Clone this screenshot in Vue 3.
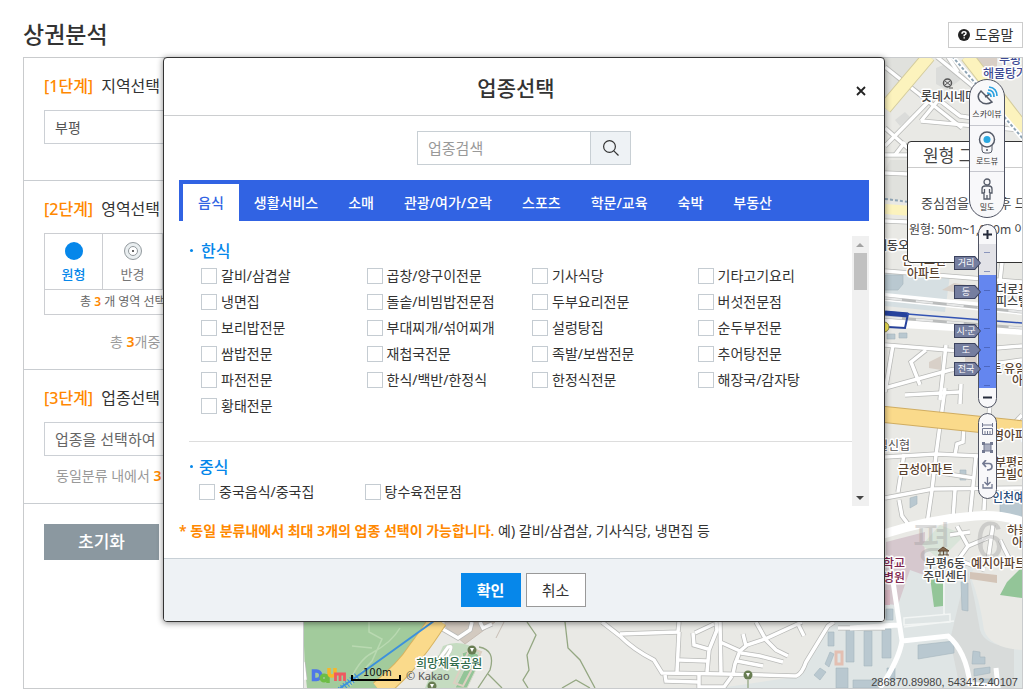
<script setup>
import { ref } from 'vue'

const tabs = ['음식', '생활서비스', '소매', '관광/여가/오락', '스포츠', '학문/교육', '숙박', '부동산']
const activeTab = ref('음식')
const korean = [
  '갈비/삼겹살', '곱창/양구이전문', '기사식당', '기타고기요리',
  '냉면집', '돌솥/비빔밥전문점', '두부요리전문', '버섯전문점',
  '보리밥전문', '부대찌개/섞어찌개', '설렁탕집', '순두부전문',
  '쌈밥전문', '재첩국전문', '족발/보쌈전문', '추어탕전문',
  '파전전문', '한식/백반/한정식', '한정식전문', '해장국/감자탕',
  '황태전문'
]
const chinese = ['중국음식/중국집', '탕수육전문점']
const picked = ref([])
const level = ref(9)
const levels = [
  { name: '거리', top: 31 }, { name: '동', top: 60 }, { name: '시·군', top: 99 },
  { name: '도', top: 118 }, { name: '전국', top: 137 }
]
const streets = [
  'M885 67 L962 128', 'M937 57 L975 88', 'M885 128 L910 150', 'M934 96 L960 116 L1000 122', 'M934 96 L885 146',
  'M921 121 L1022 130', 'M885 155 L910 155', 'M895 155 L905 142', 'M885 173 L908 174', 'M921 121 L940 98', 'M948 57 L958 72',
  'M885 221 L908 222', 'M885 271 L1022 282', 'M1002 262 L998 300', 'M885 388 L950 370 L1022 360', 'M893 345 L885 392',
  'M946 345 L940 400', 'M885 345 L960 351 L1022 346', 'M905 395 L960 392', 'M926 350 L911 362 L920 385', 'M961 384 L960 404',
  'M945 388 L936 455 L932 490 L927 524', 'M885 457 L936 454 L980 456', 'M885 498 L933 489 L1022 488', 'M904 454 L898 492',
  'M964 426 L963 442 L957 444 L955 455', 'M976 456 L970 516', 'M935 472 L974 478', 'M899 500 L902 516 L908 524',
  'M955 490 L953 518', 'M990 400 L984 510', 'M957 526 L968 546 L992 536', 'M993 525 L988 560', 'M950 535 L970 532', 'M968 546 L958 560 L985 570',
  'M1000 540 L1010 560', 'M1022 415 L1008 430'
]
const lowerStreets = [
  'M602 622 L620 636 Q634 650 654 660 L662 673 L724 674 L796 676 Q802 674 806 662 L828 626 L834 622', 'M620 634 L678 632 L679 622', 'M679 632 L677 672',
  'M679 660 L707 661', 'M707 672 L709 650 L717 630 L716 622', 'M720 622 L721 674', 'M695 633 L714 624', 'M693 633 L694 645 L708 649',
  'M720 642 L740 651 L747 645 L765 639 L802 622', 'M756 622 L766 640 L776 650 L788 656', 'M746 646 L743 634', 'M740 651 L735 664 L733 674',
  'M741 653 L760 656 L783 662', 'M737 661 L763 666', 'M798 624 L804 636', 'M665 675 L666 681 L698 682', 'M699 674 L699 687 L724 687 L732 676', 'M838 628 L885 628',
  'M441 628 L458 638 L470 630 L472 622', 'M480 622 L483 628 L492 624', 'M303 662 L305 680'
]
const buildings = [
  'M828 632 h6 v14 h-6z', 'M846 629 h8 v33 h-8z', 'M864 631 h8 v35 h-8z', 'M830 652 l4 2 l-5 13 l-4 -3z', 'M820 668 l6 4 l-6 8 l-6 -5z',
  'M836 668 h12 v20 h-12z', 'M853 680 h30 v8 h-30z', 'M882 629 h9 v29 h-9z', 'M886 609 h7 v11 h-7z', 'M918 645 l36 -4 v12 l-36 6z',
  'M887 668 h8 v12 h-8z', 'M961 582 l7 1 v28 l-6 -1z', 'M973 651 l7 1 v5 h5 v7 h-13z', 'M974 669 l16 -2 v6 l-16 3z', 'M980 679 h15 v6 h-15z',
  'M885 275 h18 v9 l-5 6 h-13z', 'M910 498 l7 -2 v8 l-7 4z', 'M1000 500 l22 4 v14 l-22 -5z', 'M960 470 h6 v10 h-6z', 'M887 334 h8 v5 h-8z', 'M899 333 h8 v5 h-8z'
]
const labels = [
  { t: '부평', x: 999, y: 64, c: 'navy' }, { t: '해물탕거리', x: 983, y: 78, c: 'navy' }, { t: '롯데시네마', x: 921, y: 101, c: 'dark' },
  { t: '대동오', x: 876, y: 250, c: 'dark' }, { t: '안국오현', x: 902, y: 265, c: 'brown' }, { t: '아파트', x: 907, y: 278, c: 'brown' },
  { t: '더로프', x: 996, y: 294, c: 'dark' }, { t: '피스텔', x: 996, y: 306, c: 'dark' }, { t: '트', x: 991, y: 373, c: 'brown' }, { t: '유일', x: 1004, y: 373, c: 'brown' },
  { t: '아', x: 1012, y: 385, c: 'brown' }, { t: '일신협', x: 877, y: 450, c: 'plain' }, { t: '금성아파트', x: 898, y: 474, c: 'brown' },
  { t: '영아파', x: 993, y: 440, c: 'brown' }, { t: '부평리', x: 995, y: 467, c: 'brown' }, { t: '크빌아', x: 995, y: 479, c: 'brown' },
  { t: '인천예', x: 992, y: 502, c: 'blue' }, { t: '하늘', x: 1007, y: 535, c: 'brown' }, { t: '아', x: 1012, y: 547, c: 'brown' },
  { t: '학교', x: 883, y: 568, c: 'wine' }, { t: '병원', x: 883, y: 582, c: 'wine' }, { t: '부평6동', x: 925, y: 568, c: 'dark' },
  { t: '주민센터', x: 923, y: 581, c: 'dark' }, { t: '예지아파트', x: 971, y: 568, c: 'brown' }
]
</script>

<template>
  <div class="page">
    <header class="top">
      <h1>상권분석</h1>
      <button class="help" type="button">
        <svg width="12" height="12" viewBox="0 0 12 12" aria-hidden="true"><circle cx="6" cy="6" r="6" fill="#222" /><path d="M4 4.8 Q4 2.8 6 2.8 Q8 2.8 8 4.4 Q8 5.3 6.2 6.2 V7.2 M6.2 8.3 V9.6" fill="none" stroke="#fff" stroke-width="1.5" /></svg>
        도움말
      </button>
    </header>

    <div class="workspace">
      <aside class="steps">
        <section class="step one">
          <h2><b>[1단계]</b> 지역선택</h2>
          <input class="field" type="text" value="부평" aria-label="지역">
        </section>
        <section class="step two">
          <h2><b>[2단계]</b> 영역선택</h2>
          <div class="shapes">
            <button type="button" class="on">
              <svg width="18" height="18" viewBox="0 0 18 18" aria-hidden="true"><circle cx="9" cy="9" r="9" fill="#0687ea" /></svg>
              원형
            </button>
            <button type="button">
              <svg width="18" height="18" viewBox="0 0 18 18" aria-hidden="true"><g fill="#e9eef0" stroke="#92999d"><circle cx="9" cy="9" r="8.5" /><circle cx="9" cy="9" r="4.5" fill="#fff" /></g><circle cx="9" cy="9" r="1" fill="#333" /></svg>
              반경
            </button>
            <span></span><span></span>
          </div>
          <p class="count">총 <b>3</b> 개 영역 선택</p>
          <p class="limit">총 <b>3</b>개중</p>
        </section>
        <section class="step three">
          <h2><b>[3단계]</b> 업종선택</h2>
          <input class="field wide" type="text" placeholder="업종을 선택하여" aria-label="업종">
          <p class="hint">동일분류 내에서 <b>3</b></p>
        </section>
        <button class="reset" type="button">초기화</button>
      </aside>

      <main class="map">
        <svg class="canvas" viewBox="303 58 719 630" preserveAspectRatio="xMaxYMin slice" role="img" aria-label="지도">
          <rect x="303" y="58" width="719" height="630" fill="#e9e9e5" />
          <path d="M885 58 H925 L885 105Z M890 160 H907 V200 H885 V170Z" fill="#e0e1dd" />
          <path d="M936 68 l12 -5 l12 7 v10 l-13 10 l-11 -6z M895 120 l10 -8 l5 5 l-10 9z" fill="#dbdcda" />
          <path d="M975 58 h22 v12 l-12 7 l-10 -6z" fill="#d9cfc6" />
          <path d="M885 270 L950 275 L945 312 L885 306Z" fill="#d6dfe2" />
          <path d="M942 290 l12 -7 l40 6 v8 l-40 -5z M929 362 l12 -6 v14 l-12 -2z M914 465 l18 -3 l4 6 l-18 7z M965 350 h12 v18 h-12z" fill="#d8d0c8" />
          <path d="M885 560 H990 L1022 600 V688 H720 L800 676 L832 622 H885Z" fill="#dfe5e5" />
          <path d="M968 570 Q975 600 980 630 Q984 645 1014 648 V688 H960 L950 640 L962 590Z" fill="#d8dbda" />
          <path d="M980 560 H1022 V650 Q990 648 984 630 Q980 600 970 575Z" fill="#e9e9e5" />
          <path d="M886 542 L925 532 L924 575 L910 570 L898 605 L885 604Z" fill="#d6c8ce" />
          <path d="M885 590 h5 v15 h-5z" fill="#d9b7c2" />
          <path d="M930 577 H943 V606 L934 607Z M1022 567 L1007 582 L1000 595 L1022 598Z" fill="#93c598" />
          <path d="M922 545 L940 525 L965 535 L940 560Z" fill="#d9e4d9" />
          <path d="M970 572 l27 3 v8 l-27 -4z" fill="#d3c4b7" />
          <path v-for="b in buildings" :key="b" :d="b" fill="#b9c8d0" stroke="#a5b5be" stroke-width=".6" />
          <path d="M836 652 h6 v12 h-6z" fill="none" stroke="#e3bfb2" stroke-width="3" />
          <path d="M303 622 H432 Q420 650 403 666 L382 688 H307 L305 670Z" fill="#a2cb9c" />
          <path d="M369 622 v10 l13 7 -10 22 -12 13 -10 12 M352 646 l20 2 M400 628 Q392 642 372 653 Q358 660 348 686" fill="none" stroke="#b9d9b1" stroke-width="1.5" />
          <path d="M443 646 Q460 638 480 651 L466 688 H425 L436 662Z" fill="#c5dcc1" />
          <path d="M462 653 l9 -3 l11 7 l-15 31 h-12 l10 -20z M432 660 l9 -6 l7 9 l-7 5z" fill="#93c598" stroke="#d4d8c7" />
          <path d="M470 648 l11 4 l-18 34 l-9 -3z" fill="none" stroke="#dccfc1" stroke-width="2" />
          <path d="M445 622 h50 l-30 22 -20 -18z M504 622 l-8 16" fill="#d3cac0" stroke="#c8bdb4" />
          <g fill="none" stroke="#b9bab8" stroke-width="5"><path v-for="s in streets" :key="s" :d="s" /><path v-for="s in lowerStreets" :key="s" :d="s" /></g>
          <g fill="none" stroke="#fff" stroke-width="3.500"><path v-for="s in streets" :key="s" :d="s" /><path v-for="s in lowerStreets" :key="s" :d="s" /></g>
          <path d="M440 658 L448 647 Q453 645 450 651 L442 664" fill="none" stroke="#c7cbc2" stroke-width="4" /><path d="M440 658 L448 647 Q453 645 450 651 L442 664" fill="none" stroke="#fff" stroke-width="3" />

          <path d="M885 108 L929 56 M967 56 L1024 130" fill="none" stroke="#d4cc9d" stroke-width="14" />
          <path d="M885 108 L929 56 M967 56 L1024 130" fill="none" stroke="#fcf3bd" stroke-width="12" />
          <path d="M952 56 L1024 140" fill="none" stroke="#fff" stroke-width="5" /><path d="M952 56 L1024 140" fill="none" stroke="#8ea4b4" stroke-width="2" stroke-dasharray="3 2" />
          <path d="M885 199 L910 202" stroke="#8ea4b4" stroke-width="2" stroke-dasharray="3 2" /><path d="M885 209 L912 211" stroke="#fcf3bd" stroke-width="10" />
          <g fill="none" stroke="#fff" stroke-width="8"><path d="M885 297 L1022 311" /><path d="M885 323 L1022 331" /></g>
          <g fill="none" stroke="#babcbc" stroke-width="3"><path d="M885 298 L1022 312" /><path d="M885 317 L1022 328" /></g>
          <g fill="none" stroke="#e7e8e8" stroke-width="2" stroke-dasharray="17 14"><path d="M885 298 L1022 312" /><path d="M885 317 L1022 328" /></g>
          <path d="M885 312 L908 314 L905 328 L888 327" fill="none" stroke="#26429c" stroke-width="2" /><path d="M885 313 L908 315" stroke="#26429c" stroke-width="5" /><path d="M907 314 L1022 323" stroke="#3454b4" stroke-width="1.5" />
          <circle cx="884" cy="327" r="5" fill="#faeb55" stroke="#8a8542" />
          <path d="M880 414 L1024 429" stroke="#d0ad62" stroke-width="17" /><path d="M880 414 L1024 429" stroke="#fada8b" stroke-width="15" />
          <path d="M880 535 Q930 519 975 516 Q1000 514 1024 522" fill="none" stroke="#fff" stroke-width="9" />
          <path d="M892 575 L902 641 Q899 660 880 688 M850 628 L898 625 M902 641 L948 636 Q966 651 970 684 L998 687 L996 668" fill="none" stroke="#fff" stroke-width="5" />
          <path d="M904 618 l46 -4 v8 l-46 3z M904 627 l50 -6 M944 575 v40" fill="none" stroke="#f2f5f4" stroke-width="1.5" />
          <path d="M438 620 Q425 640 417 650 Q405 669 379 690" fill="none" stroke="#d7b460" stroke-width="19" /><path d="M438 620 Q425 640 417 650 Q405 669 379 690" fill="none" stroke="#fada8b" stroke-width="17" />
          <path d="M434 621 L352 680 L340 688" fill="none" stroke="#3d91dc" stroke-width="2" /><path d="M357 676 L340 690" stroke="#3d91dc" stroke-width="7" stroke-dasharray="1 2" />
          <g fill="none" stroke="#94a782" stroke-width="1.3"><path d="M527 622 L536 635 L527 655 L529 670 L523 680 L528 688" /><path d="M565 622 L568 648 L580 660 L595 688" /><path d="M479 647 Q496 650 490 670 L478 688" /><path d="M748 680 V688" /><path d="M488 674 L502 688 M562 688 L576 680 L590 688" /></g>
          <g v-for="m in [[472, 650], [432, 686], [748, 675]]" :key="m[0]"><circle :cx="m[0]" :cy="m[1]" r="4.5" fill="#687d52" /><path :d="`M${m[0] - 2} ${m[1] - 2} h4 l-2 4z`" fill="#fff" /></g>
          <text class="ghost" x="912" y="559">평</text><text class="ghost latin" x="975" y="558">6</text>
          <g fill="none" stroke="#555"><circle cx="947.500" cy="83" r="4" fill="#ddd" stroke-width="1.5" /><path d="M945 81 l5 4 M950 81 l-5 4 M949 88 h4" /></g>
          <path d="M943 547 L938 551 H949 Z M940 551 v4 M943.500 551 v4 M947 551 v4 M938 555 h11" fill="#83694e" stroke="#624a35" />
          <text v-for="l in labels" :key="l.t + l.y" class="place" :class="l.c" :x="l.x" :y="l.y">{{ l.t }}</text>
          <text class="place park" x="416" y="668">희망체육공원</text>
          <g class="logo" fill="none" stroke-width="3.500"><path d="M313.500 671 h3 a4 4 0 0 1 0 8.500 h-3z" stroke="#4e78e8" /><circle cx="324" cy="678" r="2.700" stroke="#6dbd45" /><path d="M328 674 V683" stroke="#6dbd45" /><path d="M329 668 v5 q0 3 3 3 q3 0 3 -3 v-5" stroke="#f6b72a" /><path d="M335.500 681 v-7 h9 v7 M340 674 v7" stroke="#ef5961" stroke-width="2.800" /></g>
          <path d="M352 675 V680 H400 V675" fill="none" stroke="#000" stroke-width="2" />
          <text class="scale" x="363" y="676">100m</text><text class="copyright" x="406" y="680">© Kakao</text>
        </svg>

        <section class="notice">
          <h2>원형 그리기</h2>
          <p>중심점을 클릭 후 드래그</p>
          <p class="radius">원형: 50m~1,000m 이내</p>
        </section>

        <div class="views">
          <button type="button">
            <svg width="24" height="22" viewBox="0 0 24 22" fill="none" aria-hidden="true"><path d="M6 5 Q1 10 5 15 Q10 20 17 16 Z M10 11 L15 8" stroke="#555b68" stroke-width="1.500" /><g stroke="#2ba1e0" stroke-width="1.700"><path d="M12 7 Q16 7 16 11 M13 4 Q19 4 19 11 M14 1 Q22 2 22 10" /></g></svg>
            스카이뷰
          </button>
          <button type="button">
            <svg width="20" height="24" viewBox="0 0 20 24" fill="#f8f8fa" stroke="#555b68" aria-hidden="true"><path d="M5 14 V19 Q5 22 8 22 H12 Q15 22 15 19 V14" /><circle cx="10" cy="8.500" r="7.500" stroke-width="1.500" /><circle cx="10" cy="8.500" r="3.500" fill="#2ba8e0" stroke="none" /><path d="M9 19 h2" stroke-width="1.500" /></svg>
            로드뷰
          </button>
          <button type="button">
            <svg width="14" height="23" viewBox="0 0 14 23" fill="#f8f8fa" stroke="#555b68" stroke-width="1.300" aria-hidden="true"><circle cx="7" cy="4" r="3" /><path d="M5 8 H9 Q12 8 12 11 V15 H10 V21 H4 V15 H2 V11 Q2 8 5 8 M4.500 11 V15 M9.500 11 V15 M7 17 V21" /></svg>
            밀도
          </button>
        </div>

        <div class="zoomer">
          <button type="button" aria-label="확대"><svg width="9" height="9" viewBox="0 0 9 9" aria-hidden="true"><path d="M4.500 0 V9 M0 4.500 H9" stroke="#252b3b" stroke-width="2" /></svg></button>
          <input v-model="level" type="range" min="0" max="12" aria-label="지도 레벨">
          <button type="button" aria-label="축소"><svg width="9" height="9" viewBox="0 0 9 9" aria-hidden="true"><path d="M0 4.500 H9" stroke="#252b3b" stroke-width="2" /></svg></button>
          <button v-for="l in levels" :key="l.name" class="tag" type="button" :style="{ top: l.top + 'px' }"><span>{{ l.name }}</span></button>
        </div>

        <div class="tools">
          <button type="button" aria-label="거리 재기"><svg width="11" height="12" viewBox="0 0 11 12" fill="none" stroke="#727991" aria-hidden="true"><path d="M.5 0 V4 M10.500 0 V4 M0 2 H11 M.5 5.500 H10.500 V11.500 H.5 Z M3 8 V11 M5.500 8 V11 M8 8 V11" /></svg></button>
          <button type="button" aria-label="면적 재기"><svg width="11" height="11" viewBox="0 0 11 11" aria-hidden="true"><path d="M2 2 H9 V9 H2Z" fill="#a9aec0" stroke="#727991" /><path d="M0 0 h3 v3 h-3z M8 0 h3 v3 h-3z M0 8 h3 v3 h-3z M8 8 h3 v3 h-3z" fill="#727991" /></svg></button>
          <button type="button" aria-label="되돌리기"><svg width="11" height="11" viewBox="0 0 11 11" fill="none" stroke="#727991" stroke-width="1.700" aria-hidden="true"><path d="M4 0 L1 3.500 L4 7 M1 3.500 H7 Q10 3.500 10 6.500 Q10 10 5 10" /></svg></button>
          <button type="button" aria-label="저장"><svg width="11" height="12" viewBox="0 0 11 12" fill="none" stroke="#727991" stroke-width="1.300" aria-hidden="true"><path d="M5.500 0 V8 M2.500 5 L5.500 8 L8.500 5 M1 7 V11 H10 V7" /></svg></button>
        </div>
        <p class="coords">286870.89980, 543412.40107</p>
      </main>

      <section class="dialog" role="dialog" aria-labelledby="dialog-title">
        <header class="dialog-head">
          <h2 id="dialog-title">업종선택</h2>
          <button type="button" aria-label="닫기"><svg width="10" height="10" viewBox="0 0 10 10" aria-hidden="true"><path d="M1 1 L9 9 M9 1 L1 9" stroke="#222" stroke-width="1.800" /></svg></button>
        </header>
        <div class="dialog-body">
          <form class="search" @submit.prevent>
            <input type="text" placeholder="업종검색" aria-label="업종검색">
            <button type="submit" aria-label="검색"><svg width="16" height="16" viewBox="0 0 16 16" fill="none" stroke="#333" stroke-width="1.200" aria-hidden="true"><circle cx="6.500" cy="6.500" r="5.900" /><path d="M10.800 10.800 L15.500 15.500" /></svg></button>
          </form>
          <nav class="tabs">
            <button v-for="t in tabs" :key="t" type="button" :class="{ on: t === activeTab }" @click="activeTab = t">{{ t }}</button>
          </nav>
          <div class="list">
            <div class="groups">
              <fieldset class="first">
                <legend>한식</legend>
                <div class="grid">
                  <label v-for="k in korean" :key="k"><input v-model="picked" type="checkbox" :value="k">{{ k }}</label>
                </div>
              </fieldset>
              <fieldset class="second">
                <legend>중식</legend>
                <div class="grid">
                  <label v-for="k in chinese" :key="k"><input v-model="picked" type="checkbox" :value="k">{{ k }}</label>
                </div>
              </fieldset>
            </div>
            <div class="scrollbar" aria-hidden="true"><i class="up"></i><i class="thumb"></i><i class="down"></i></div>
          </div>
          <p class="note"><b>* 동일 분류내에서 최대 3개의 업종 선택이 가능합니다.</b> 예) 갈비/삼겹살, 기사식당, 냉면집 등</p>
        </div>
        <footer class="dialog-foot">
          <button class="ok" type="button">확인</button>
          <button type="button">취소</button>
        </footer>
      </section>
    </div>
  </div>
</template>

<style>
body { background: #fff; }
</style>

<style scoped>
.page, .page * { box-sizing: border-box; }
.page { padding: 0 3px 9px 23px; color: #333; font: 14px/20px "Noto Sans", "Noto Sans CJK KR", sans-serif; }
h1, h2, p { margin: 0; }
button, input { font: inherit; color: inherit; margin: 0; }
button { padding: 0; border: 0; background: none; cursor: pointer; }
.top { display: flex; justify-content: space-between; align-items: flex-start; height: 57px; }
h1 { padding-top: 18px; font-size: 23px; line-height: 32px; font-weight: 500; }
.help { display: flex; align-items: center; justify-content: center; gap: 5px; width: 75px; height: 26px; margin-top: 22px; border: 1px solid #ccc; background: #fff; white-space: nowrap; }
.workspace { position: relative; display: flex; border: 1px solid #c9cbcd; }
.steps { flex: 0 0 279px; min-height: 630px; border-right: 1px solid #c9cbcd; }
.step { padding: 18px 20px 0; border-bottom: 1px solid #c9cdd1; }
.one { height: 123px; }
.two { height: 189px; }
.three { height: 134px; }
.step h2 { display: flex; gap: 8px; font-size: 16px; line-height: 20px; font-weight: 400; margin-bottom: 14px; }
.step b { color: #f80; font-weight: 600; }
.step h2 b { font-weight: 500; }
.field { display: block; width: 100%; height: 34px; padding: 0 10px; border: 1px solid #ccd0d5; color: #555; background: #fff; }
.wide { font-size: 15px; }
.wide::placeholder { color: #666; opacity: 1; }
.shapes { display: grid; grid-template-columns: 58px 60px 60px 59px; height: 57px; border: 1px solid #ccced2; }
.shapes > * { border-right: 1px solid #ccced2; }
.shapes button { display: flex; flex-direction: column; align-items: center; gap: 5px; padding-top: 8px; font-size: 13px; line-height: 18px; color: #777; }
.shapes > :last-child { border-right: 0; }
.shapes .on { color: #0687ea; font-weight: 500; }
.count { height: 25px; padding: 0 30px 0 35px; border: 1px solid #ccced2; border-top: 0; font-size: 12px; line-height: 24px; color: #666; white-space: nowrap; }
.limit { padding: 17px 0 0 66px; color: #999; }
.hint { padding: 10px 0 0 12px; color: #999; white-space: nowrap; }
.reset { display: block; width: 115px; height: 36px; margin: 20px; background: #8b98a0; color: #fff; font-size: 17px; font-weight: 500; }

.map { position: relative; flex: 1; min-width: 0; overflow: hidden; }
.canvas { display: block; width: 100%; height: 100%; }
.place { font: 500 12px "Noto Sans CJK KR", sans-serif; fill: #444; stroke: #fff; stroke-width: 3px; paint-order: stroke; stroke-linejoin: round; }
.plain { fill: #555; font-weight: 400; }
.navy { fill: #3e4b94; }
.brown { fill: #5b432f; }
.wine { fill: #7d244e; }
.blue { fill: #264d7c; }
.park { fill: #2e6b4a; }
.ghost { font: 44px "Noto Sans CJK KR", sans-serif; fill: #999; fill-opacity: .35; }
.latin { font: 52px "Liberation Sans", sans-serif; }
.scale { font: 10px "DejaVu Sans", sans-serif; fill: #111; }
.copyright { font: 11px "Noto Sans", sans-serif; fill: #555; }
.notice { position: absolute; top: 83px; right: -91px; width: 206px; height: 122px; border: 1px solid #333; border-radius: 4px; background: #fff; color: #444; font-size: 13px; white-space: nowrap; overflow: hidden; }
.notice h2 { height: 26px; padding-left: 15px; border-bottom: 1px solid #ccc; font-size: 17px; line-height: 27px; font-weight: 400; }
.notice p { padding: 24px 0 0 13px; line-height: 22px; }
.notice .radius { padding: 5px 0 0 1px; font-size: 12px; }
.views, .zoomer, .tools { position: absolute; border: 1px solid #4f5362; background: #f8f8fa; border-radius: 18px; display: flex; flex-direction: column; }
.views { top: 21px; right: 17px; width: 36px; height: 139px; overflow: hidden; }
.views button { flex: 1; display: flex; flex-direction: column; align-items: center; justify-content: center; color: #333; font-size: 8px; line-height: 11px; white-space: nowrap; border-bottom: 1px solid #c6c7ce; }
.views button:last-child { border: 0; }
.zoomer { top: 166px; right: 25px; width: 19px; height: 184px; border-radius: 10px; }
.zoomer > button:not(.tag) { height: 19px; flex: none; display: grid; place-items: center; }
.zoomer input { flex: 1; width: 17px; min-height: 0; appearance: none; writing-mode: vertical-lr; border-block: 0; background: repeating-linear-gradient(to bottom, transparent 0 8px, #3347907f 8px 9px, transparent 9px 19px) 5px 0 / 6px 100% no-repeat, linear-gradient(#e2e2e7 0 31px, #6486ef 31px); }
.zoomer input::-webkit-slider-thumb { appearance: none; width: 17px; height: 1px; background: transparent; }
.tag { position: absolute; right: 15px; width: 27px; height: 14px; background: #3c435f; clip-path: polygon(0 0, 78% 0, 100% 50%, 78% 100%, 0 100%); }
.tag span { display: block; margin: 1px; padding-right: 3px; height: 12px; background: #757e9f; clip-path: polygon(0 0, 78% 0, 100% 50%, 78% 100%, 0 100%); color: #fff; font-size: 9px; line-height: 12px; white-space: nowrap; }
.tools { top: 355px; right: 25px; width: 19px; height: 86px; padding: 6px 0; border-radius: 10px; }
.tools button { flex: 1; display: grid; place-items: center; }
.coords { position: absolute; right: 4px; bottom: 0; font: 11px/12px "Liberation Sans", Arial, sans-serif; color: #444; }

.dialog { position: absolute; top: -1px; left: 139px; right: 137px; border: 1px solid #333; border-radius: 4px; background: #fff; box-shadow: 0 1px 6px #0007; overflow: hidden; }
.dialog-head { position: relative; height: 58px; padding-right: 16px; border-bottom: 1px solid #ccced0; text-align: center; }
.dialog-head h2 { font-size: 21px; line-height: 61px; font-weight: 500; }
.dialog-head button { position: absolute; top: 23px; right: 17px; width: 12px; height: 20px; display: grid; place-items: center; }
.dialog-body { padding: 15px 15px 0; }
.search { display: flex; width: 214px; height: 34px; margin: 0 auto 15px; border: 1px solid #c8cfd4; }
.search input { flex: 1; min-width: 0; padding: 0 10px; border: 0; background: #fff; font-size: 15px; }
.search input::placeholder { color: #999; opacity: 1; }
.search button { width: 40px; display: grid; place-items: center; border-left: 1px solid #c8cfd4; background: #eef2f5; }
.tabs { display: flex; height: 41px; padding: 4px 4px 0; background: #3163e3; }
.tabs button { padding: 0 15px; color: #fff; font-weight: 500; white-space: nowrap; }
.tabs .on { background: #fff; color: #3163e3; }
.list { display: flex; height: 270px; margin-top: 15px; }
.groups { flex: 1; min-width: 0; margin-left: 10px; overflow: hidden; }
fieldset { min-width: 0; margin: 0; padding: 0; border: 0; }
legend { position: relative; display: block; padding: 3px 0 0 12px; line-height: 24px; font-size: 16px; font-weight: 500; color: #0687ea; }
legend::before { content: ""; position: absolute; left: 1px; top: 13px; width: 3px; height: 3px; border-radius: 2px; background: #0687ea; }
.grid { display: grid; grid-template-columns: repeat(4, 1fr); grid-auto-rows: 26px; padding-left: 12px; margin-right: -11px; }
label { display: flex; align-items: center; gap: 4px; white-space: nowrap; }
label input { appearance: none; flex: none; width: 16px; height: 16px; border: 1px solid #c5ccd2; background: #fff; }
.first { padding-bottom: 22px; border-bottom: 1px solid #ddd; }
.second { margin-top: 10px; }
.second legend { padding-left: 10px; }
.second .grid { padding-left: 10px; margin-right: -9px; }
.scrollbar { position: relative; flex: 0 0 17px; background: #f0f0f0; }
.scrollbar i { position: absolute; left: 4px; border: 4px solid transparent; }
.scrollbar .up { top: 3px; border-bottom-color: #a3a3a3; }
.scrollbar .down { bottom: 2px; border-top-color: #444; }
.scrollbar .thumb { left: 2px; top: 17px; width: 13px; height: 37px; border: 0; background: #c1c1c1; }
.note { height: 52px; padding-top: 15px; white-space: nowrap; font-size: 14px; }
.note b { color: #f80; font-weight: 600; }
.dialog-foot { display: flex; justify-content: center; gap: 5px; height: 63px; padding: 14px 2px 0 0; border-top: 1px solid #c8d0d6; background: #eef2f5; }
.dialog-foot button { width: 60px; height: 34px; border: 1px solid #999; background: #fff; font-size: 15px; }
.dialog-foot .ok { border-color: #0687ea; background: #0687ea; color: #fff; font-weight: 600; }
</style>
